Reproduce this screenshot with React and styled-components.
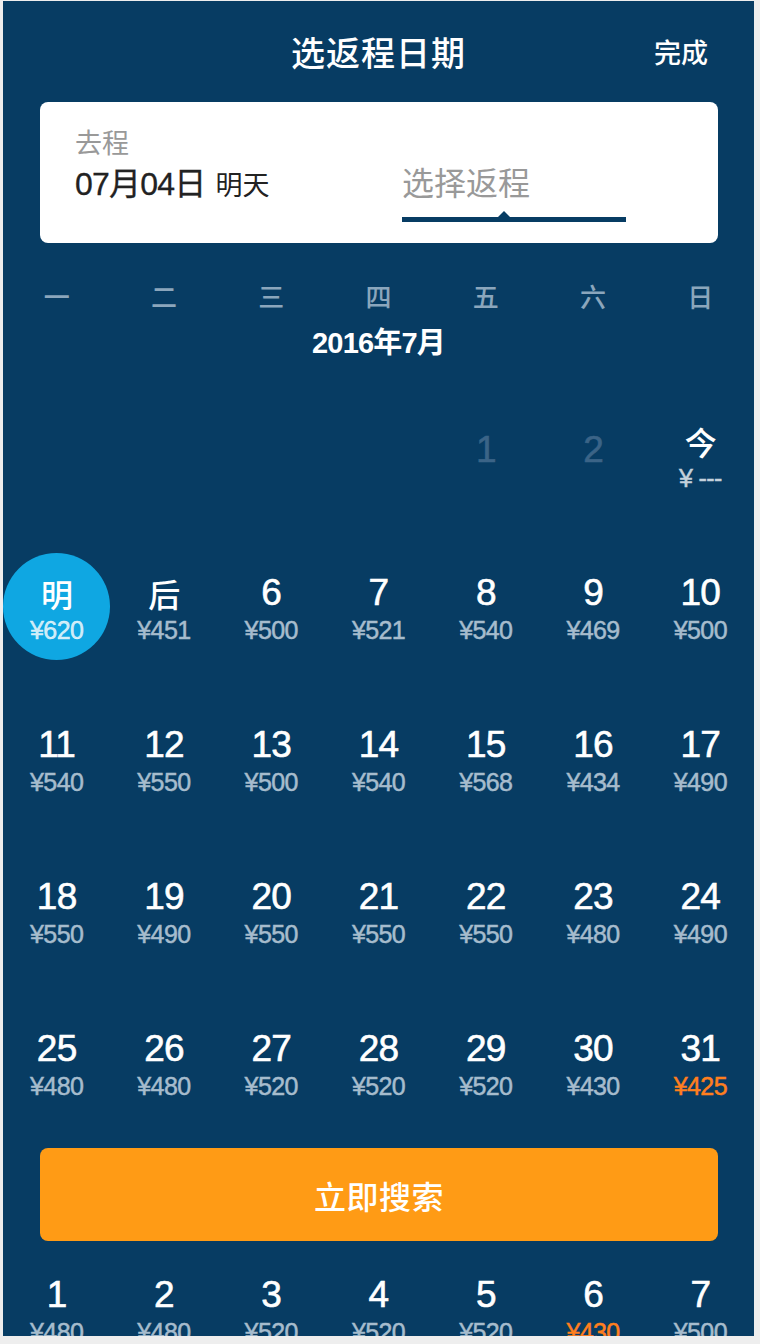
import React from "react";
import styled, { createGlobalStyle, css } from "styled-components";

const NAVY = "#073c63";

const Global = createGlobalStyle`
  html, body { margin: 0; padding: 0; background: #eeeeee; }
  body { font-family: "Liberation Sans", "Noto Sans CJK SC", sans-serif; }
  * { box-sizing: border-box; }
`;

const Frame = styled.div`
  padding: 1px 6px 0 3px;
  width: 760px;
`;

const Panel = styled.div`
  background: ${NAVY};
  height: 1335px;
  overflow: hidden;
  color: #fff;
`;

const Header = styled.header`
  display: grid;
  grid-template-columns: 1fr auto 1fr;
  align-items: center;
  height: 101px;
`;

const Title = styled.h1`
  grid-column: 2;
  margin: 0;
  font-family: "Noto Sans CJK SC", sans-serif;
  font-size: 34px;
  font-weight: 500;
  letter-spacing: 1px;
  line-height: 44px;
`;

const Done = styled.button`
  justify-self: end;
  margin-right: 46px;
  background: none;
  border: 0;
  padding: 0;
  color: #fff;
  font-family: "Noto Sans CJK SC", sans-serif;
  font-size: 27px;
  font-weight: 500;
  line-height: 40px;
`;

const Card = styled.div`
  margin: 0 36px 0 37px;
  height: 141px;
  background: #fff;
  border-radius: 8px;
  padding: 21px 92px 0 35px;
  display: grid;
  grid-template-columns: 1fr 224px;
`;

const Leg = styled.div`
  display: flex;
  flex-direction: column;
`;

const LegLabel = styled.div`
  font-family: "Noto Sans CJK SC", sans-serif;
  font-size: 27px;
  line-height: 38px;
  color: #999;
`;

const LegDate = styled.div`
  margin-top: 2px;
  font-size: 32px;
  line-height: 42px;
  color: #222;
  display: flex;
  align-items: baseline;
  gap: 10px;
  letter-spacing: -0.8px;
  -webkit-text-stroke: 0.3px #222;
`;

const LegHint = styled.span`
  font-family: "Noto Sans CJK SC", sans-serif;
  font-size: 27px;
  letter-spacing: 0;
  -webkit-text-stroke: 0;
`;

const Return = styled.div`
  display: flex;
  flex-direction: column;
  padding-top: 37px;
`;

const ReturnText = styled.div`
  font-family: "Noto Sans CJK SC", sans-serif;
  font-size: 32px;
  line-height: 44px;
  color: #999;
  margin-top: -1px;
`;

const Underline = styled.div`
  position: relative;
  margin-top: 14px;
  height: 5px;
  background: ${NAVY};
  &::after {
    content: "";
    position: absolute;
    left: 96px;
    top: -6px;
    border-left: 6px solid transparent;
    border-right: 6px solid transparent;
    border-bottom: 6px solid ${NAVY};
  }
`;

const Week = styled.div`
  margin-top: 32px;
  height: 40px;
  display: grid;
  grid-template-columns: repeat(7, 1fr);
  align-items: center;
  text-align: center;
  font-family: "Noto Sans CJK SC", sans-serif;
  font-size: 26px;
  font-weight: 500;
  color: #8ba6bc;
`;

const MonthTitle = styled.div`
  text-align: center;
  line-height: 56px;
  padding-bottom: 11px;
  font-size: 29px;
  font-weight: 700;
  letter-spacing: -0.8px;
`;

const Grid = styled.div`
  display: grid;
  grid-template-columns: repeat(7, 1fr);
  grid-auto-rows: 152px;
`;

const Cell = styled.div`
  display: flex;
  justify-content: center;
  padding-top: 18.5px;
`;

const Inner = styled.div`
  width: 107px;
  height: 107px;
  border-radius: 50%;
  display: flex;
  flex-direction: column;
  align-items: center;
  gap: 2px;
  padding-top: ${(p) => (p.$dim ? "30.5px" : "21.5px")};
  ${(p) =>
    p.$selected &&
    css`
      background: #0fa7e2;
    `}
`;

const Num = styled.div`
  font-size: ${(p) => (p.$cjk ? "32px" : "37px")};
  font-family: ${(p) =>
    p.$cjk ? `"Noto Sans CJK SC", sans-serif` : `"Liberation Sans", sans-serif`};
  font-weight: ${(p) => (p.$cjk ? 500 : 400)};
  line-height: 38px;
  letter-spacing: -0.8px;
  color: ${(p) => (p.$dim ? "#3b6487" : "#fff")};
  -webkit-text-stroke: ${(p) => (p.$cjk ? "0" : "0.6px")} currentColor;
`;

const Price = styled.div`
  font-size: 25px;
  line-height: 32px;
  letter-spacing: -0.6px;
  -webkit-text-stroke: 0.5px currentColor;
  color: ${(p) =>
    p.$low ? "#ff7f1e" : p.$selected ? "rgba(255,255,255,0.78)" : p.$none ? "#c4d1dc" : "#a6bccd"};
`;

const SearchButton = styled.button`
  display: block;
  margin: 6px 36px -5px 37px;
  width: calc(100% - 73px);
  height: 93px;
  border: 0;
  border-radius: 8px;
  background: #ff9b15;
  color: #fff;
  font-family: "Noto Sans CJK SC", sans-serif;
  font-size: 32px;
  font-weight: 500;
  letter-spacing: 0.5px;
`;

const july = [
  null, null, null, null,
  { d: "1", dim: true },
  { d: "2", dim: true },
  { d: "今", cjk: true, p: "¥ ---", none: true },
  { d: "明", cjk: true, p: "¥620", selected: true },
  { d: "后", cjk: true, p: "¥451" },
  { d: "6", p: "¥500" },
  { d: "7", p: "¥521" },
  { d: "8", p: "¥540" },
  { d: "9", p: "¥469" },
  { d: "10", p: "¥500" },
  { d: "11", p: "¥540" },
  { d: "12", p: "¥550" },
  { d: "13", p: "¥500" },
  { d: "14", p: "¥540" },
  { d: "15", p: "¥568" },
  { d: "16", p: "¥434" },
  { d: "17", p: "¥490" },
  { d: "18", p: "¥550" },
  { d: "19", p: "¥490" },
  { d: "20", p: "¥550" },
  { d: "21", p: "¥550" },
  { d: "22", p: "¥550" },
  { d: "23", p: "¥480" },
  { d: "24", p: "¥490" },
  { d: "25", p: "¥480" },
  { d: "26", p: "¥480" },
  { d: "27", p: "¥520" },
  { d: "28", p: "¥520" },
  { d: "29", p: "¥520" },
  { d: "30", p: "¥430" },
  { d: "31", p: "¥425", low: true },
];

const august = [
  { d: "1", p: "¥480" },
  { d: "2", p: "¥480" },
  { d: "3", p: "¥520" },
  { d: "4", p: "¥520" },
  { d: "5", p: "¥520" },
  { d: "6", p: "¥430", low: true },
  { d: "7", p: "¥500" },
];

function Days({ days }) {
  return (
    <Grid>
      {days.map((day, i) => (
        <Cell key={i}>
          {day && (
            <Inner $selected={day.selected} $dim={day.dim}>
              <Num $cjk={day.cjk} $dim={day.dim}>{day.d}</Num>
              {day.p && (
                <Price $low={day.low} $selected={day.selected} $none={day.none}>
                  {day.p}
                </Price>
              )}
            </Inner>
          )}
        </Cell>
      ))}
    </Grid>
  );
}

export default function App() {
  return (
    <>
      <Global />
      <Frame>
        <Panel>
          <Header>
            <Title>选返程日期</Title>
            <Done>完成</Done>
          </Header>
          <Card>
            <Leg>
              <LegLabel>去程</LegLabel>
              <LegDate>
                07月04日<LegHint>明天</LegHint>
              </LegDate>
            </Leg>
            <Return>
              <ReturnText>选择返程</ReturnText>
              <Underline />
            </Return>
          </Card>
          <Week>
            {["一", "二", "三", "四", "五", "六", "日"].map((w) => (
              <span key={w}>{w}</span>
            ))}
          </Week>
          <MonthTitle>2016年7月</MonthTitle>
          <Days days={july} />
          <SearchButton>立即搜索</SearchButton>
          <Days days={august} />
        </Panel>
      </Frame>
    </>
  );
}
